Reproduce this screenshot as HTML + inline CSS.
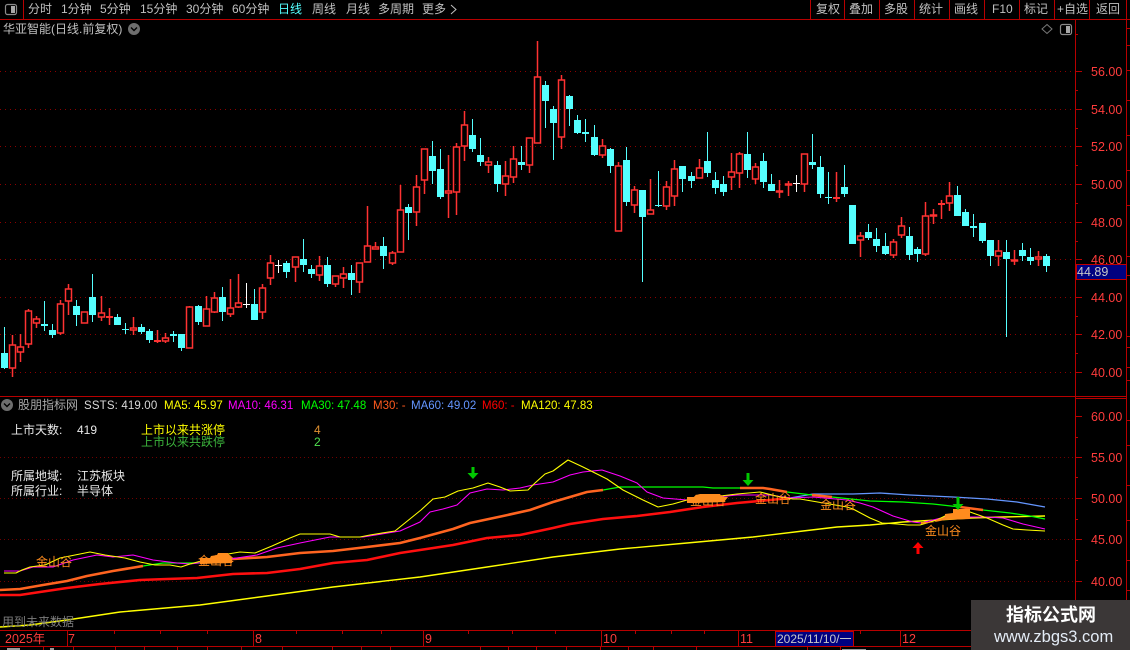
<!DOCTYPE html>
<html lang="zh">
<head>
<meta charset="utf-8">
<title>华亚智能</title>
<style>
html,body{margin:0;padding:0;background:#000;width:1130px;height:650px;overflow:hidden}
svg{display:block}
text{font-family:"Liberation Sans","WenQuanYi Zen Hei","Noto Sans CJK SC",sans-serif;font-size:12px}
.g{fill:#c0c0c0}
.ax{fill:#ff3c3c;font-size:12.5px}
.j{fill:#ff8c1e;font-size:12px}
</style>
</head>
<body>
<svg xmlns="http://www.w3.org/2000/svg" width="1130" height="650" viewBox="0 0 1130 650">
<rect width="1130" height="650" fill="#000"/>

<!-- toolbar -->
<g shape-rendering="crispEdges" stroke="#b80000" fill="none">
<path d="M0 19.5H1130M23.5 0V19M810.5 0V19M844.5 0V19M879.5 0V19M914.5 0V19M949.5 0V19M984.5 0V19M1019.5 0V19M1054.5 0V19M1089.5 0V19M1126.5 0V19"/>
</g>
<rect x="5.5" y="4.5" width="11" height="10" rx="2" fill="#000" stroke="#8a8a8a" stroke-width="1.2"/>
<rect x="11" y="6" width="4" height="7" fill="#a8a8a8"/>
<g class="g">
<text x="28" y="13" class="g">分时</text>
<text x="61" y="13" class="g">1分钟</text>
<text x="100" y="13" class="g">5分钟</text>
<text x="140" y="13" class="g">15分钟</text>
<text x="186" y="13" class="g">30分钟</text>
<text x="232" y="13" class="g">60分钟</text>
<text x="278" y="13" fill="#55ffff">日线</text>
<text x="312" y="13" class="g">周线</text>
<text x="346" y="13" class="g">月线</text>
<text x="378" y="13" class="g">多周期</text>
<text x="422" y="13" class="g">更多</text>
</g>
<path d="M451 5l5 4.5-5 4.5" fill="none" stroke="#c0c0c0"/>
<text x="816" y="13" class="g">复权</text>
<text x="849" y="13" class="g">叠加</text>
<text x="884" y="13" class="g">多股</text>
<text x="919" y="13" class="g">统计</text>
<text x="954" y="13" class="g">画线</text>
<text x="992" y="13" class="g">F10</text>
<text x="1024" y="13" class="g">标记</text>
<text x="1057" y="13" class="g">+自选</text>
<text x="1096" y="13" class="g">返回</text>

<!-- title -->
<text x="3" y="33" class="g">华亚智能(日线.前复权)</text>
<circle cx="134" cy="29" r="6" fill="#6e6e6e"/>
<path d="M131 27.5l3 3 3-3" fill="none" stroke="#000" stroke-width="1.4"/>
<path d="M1047 24.5l5 4.5-5 4.5-5-4.5z" fill="none" stroke="#7a7a7a"/>
<rect x="1060.5" y="24.5" width="11" height="10" rx="2" fill="#000" stroke="#8a8a8a" stroke-width="1.2"/>
<rect x="1066" y="26" width="4" height="7" fill="#a8a8a8"/>

<!-- grids -->
<g shape-rendering="crispEdges" stroke="#8c0000" stroke-dasharray="1 4">
<path d="M0 71.5H1075M0 109.5H1075M0 146.5H1075M0 184.5H1075M0 222.5H1075M0 259.5H1075M0 297.5H1075M0 334.5H1075M0 372.5H1075"/>
</g>
<g shape-rendering="crispEdges" stroke="#700000" stroke-dasharray="1 3">
<path d="M0 457.5H1075M0 498.5H1075M0 539.5H1075M0 581.5H1075"/>
</g>

<!-- cyan candles: wicks -->
<path shape-rendering="crispEdges" fill="none" stroke="#55ffff" d="M4.5 327V369M44.5 301V331M52.5 324V338M76.5 300V326M92.5 274V322M117.5 314V325M125.5 323V334M141.5 324V334M149.5 329V343M173.5 331V342M181.5 334V351M198.5 305V325M222.5 287V321M254.5 289V320M286.5 261V278M303.5 239V272M311.5 265V278M327.5 257V287M351.5 265V295M383.5 237V269M408.5 204V240M432.5 141V184M440.5 149V199M472.5 119V152M480.5 138V166M497.5 161V192M521.5 146V170M545.5 81V128M553.5 106V160M569.5 95V126M577.5 115V134M585.5 119V142M594.5 125V156M610.5 148V173M626.5 147V206M642.5 190V282M658.5 171V207M682.5 166V192M691.5 172V188M707.5 132V177M715.5 172V194M723.5 176V196M747.5 132V178M763.5 153V188M771.5 174V191M812.5 134V169M820.5 156V198M828.5 172V204M844.5 165V197M852.5 205V244M868.5 224V240M876.5 228V252M885.5 233V255M909.5 227V260M917.5 247V262M957.5 186V216M965.5 209V226M973.5 214V237M982.5 223V243M990.5 240V266M1006.5 240V337M1022.5 243V261M1030.5 248V265M1046.5 254V272"/>
<!-- cyan candles: bodies -->
<path shape-rendering="crispEdges" fill="#55ffff" d="M1 353h7v15h-7zM41 324h7v2h-7zM49 330h7v5h-7zM73 306h7v9h-7zM89 297h7v18h-7zM114 317h7v8h-7zM122 329h7v1h-7zM138 327h7v5h-7zM146 331h7v9h-7zM170 334h7v2h-7zM178 334h7v14h-7zM195 306h7v16h-7zM219 297h7v15h-7zM251 304h7v16h-7zM283 263h7v9h-7zM300 259h7v6h-7zM308 269h7v5h-7zM324 265h7v19h-7zM348 273h7v7h-7zM380 246h7v10h-7zM405 207h7v6h-7zM429 156h7v15h-7zM437 169h7v28h-7zM469 135h7v14h-7zM477 155h7v7h-7zM494 165h7v19h-7zM518 162h7v3h-7zM542 85h7v16h-7zM550 109h7v14h-7zM566 96h7v13h-7zM574 120h7v13h-7zM582 132h7v2h-7zM591 137h7v18h-7zM607 149h7v17h-7zM623 160h7v42h-7zM639 190h7v27h-7zM655 205h7v1h-7zM679 166h7v13h-7zM688 176h7v5h-7zM704 161h7v12h-7zM712 180h7v8h-7zM720 184h7v8h-7zM744 154h7v16h-7zM760 161h7v21h-7zM768 184h7v7h-7zM809 162h7v3h-7zM817 167h7v27h-7zM825 197h7v1h-7zM841 187h7v7h-7zM849 205h7v39h-7zM865 232h7v6h-7zM873 239h7v7h-7zM882 246h7v8h-7zM906 236h7v19h-7zM914 249h7v5h-7zM954 195h7v21h-7zM962 212h7v14h-7zM970 226h7v2h-7zM979 223h7v18h-7zM987 240h7v16h-7zM1003 252h7v7h-7zM1019 250h7v6h-7zM1027 257h7v4h-7zM1043 256h7v10h-7z"/>

<!-- red candles -->
<path fill="none" stroke="#ff3232" stroke-width="1.5" d="M9.5 345h6v23h-6zM12.5 335V345M12.5 368V377M17.5 347h6v5h-6zM20.5 334V347M20.5 352V362M25.5 311h6v33h-6zM28.5 309V311M28.5 344V348M33.5 319h6v4h-6zM36.5 316V319M36.5 323V328M57.5 304h6v29h-6zM60.5 300V304M60.5 333V335M65.5 289h6v12h-6zM68.5 284V289M68.5 301V315M81.5 312h6v11h-6zM98.5 313h6v4h-6zM101.5 296V313M101.5 317V321M109.5 308V325M130.5 328h6v2h-6zM133.5 317V328M133.5 330V335M157.5 330V343M162.5 338h6v3h-6zM165.5 333V338M165.5 341V343M186.5 307h6v41h-6zM189.5 306V307M203.5 309h6v17h-6zM206.5 296V309M211.5 298h6v14h-6zM214.5 292V298M214.5 312V313M227.5 308h6v6h-6zM230.5 279V308M230.5 314V317M235.5 303h6v4h-6zM238.5 274V303M238.5 307V308M259.5 288h6v24h-6zM262.5 284V288M262.5 312V319M267.5 263h6v15h-6zM270.5 255V263M270.5 278V285M292.5 257h6v10h-6zM295.5 267V282M316.5 266h6v9h-6zM319.5 256V266M319.5 275V281M332.5 276h6v8h-6zM335.5 284V287M340.5 274h6v4h-6zM343.5 267V274M343.5 278V288M356.5 263h6v19h-6zM359.5 282V293M364.5 246h6v16h-6zM367.5 206V246M372.5 247h6v2h-6zM375.5 242V247M389.5 253h6v10h-6zM392.5 251V253M392.5 263V265M397.5 210h6v42h-6zM400.5 185V210M413.5 187h6v25h-6zM416.5 175V187M416.5 212V226M421.5 149h6v31h-6zM424.5 180V194M445.5 191h6v2h-6zM448.5 155V191M448.5 193V218M453.5 147h6v45h-6zM456.5 143V147M456.5 192V215M461.5 125h6v21h-6zM464.5 111V125M464.5 146V161M485.5 162h6v3h-6zM488.5 157V162M488.5 165V173M502.5 176h6v8h-6zM505.5 161V176M505.5 184V196M510.5 159h6v18h-6zM513.5 146V159M513.5 177V183M526.5 138h6v27h-6zM529.5 165V173M534.5 77h6v66h-6zM537.5 41V77M558.5 80h6v57h-6zM561.5 75V80M561.5 137V149M599.5 146h6v9h-6zM602.5 139V146M602.5 155V158M615.5 166h6v65h-6zM618.5 162V166M631.5 190h6v15h-6zM634.5 186V190M634.5 205V213M647.5 210h6v4h-6zM650.5 179V210M663.5 187h6v19h-6zM666.5 181V187M666.5 206V210M671.5 169h6v27h-6zM674.5 160V169M674.5 196V206M696.5 168h6v10h-6zM699.5 159V168M728.5 172h6v5h-6zM731.5 153V172M731.5 177V190M736.5 154h6v19h-6zM739.5 152V154M739.5 173V188M752.5 167h6v12h-6zM755.5 163V167M755.5 179V184M776.5 191h6v1h-6zM779.5 180V191M779.5 192V198M785.5 184h6v1h-6zM788.5 181V184M788.5 185V196M801.5 154h6v30h-6zM804.5 184V192M836.5 172V202M857.5 236h6v4h-6zM860.5 232V236M860.5 240V257M890.5 242h6v13h-6zM893.5 239V242M893.5 255V258M898.5 226h6v9h-6zM901.5 217V226M901.5 235V238M922.5 216h6v38h-6zM925.5 202V216M925.5 254V256M930.5 215h6v1h-6zM933.5 209V215M933.5 216V224M941.5 200V219M946.5 196h6v7h-6zM949.5 182V196M949.5 203V211M995.5 251h6v5h-6zM998.5 240V251M998.5 256V266M1011.5 260h6v1h-6zM1014.5 250V260M1014.5 261V265M1035.5 257h6v2h-6zM1038.5 251V257M1038.5 259V266"/>
<path shape-rendering="crispEdges" fill="#ff3232" d="M106 316h7v2h-7zM154 340h7v2h-7zM833 197h7v2h-7zM938 203h7v2h-7z"/>
<!-- white crosses -->
<path shape-rendering="crispEdges" fill="none" stroke="#fff" d="M246.5 283V308M243 304.5H250M278.5 260V273M275 265.5H282M796.5 175V192M793 183.5H800"/>

<!-- frames and axes -->
<g shape-rendering="crispEdges" stroke="#b80000" fill="none">
<path d="M0 396.5H1126M0 630.5H1130M0 646.5H1130M1075.5 20V630M1126.5 20V630M1076 398.5H1126"/>
<path d="M1075 71.5h7M1075 109.5h7M1075 146.5h7M1075 184.5h7M1075 222.5h7M1075 259.5h7M1075 297.5h7M1075 334.5h7M1075 372.5h7M1075 416.5h7M1075 457.5h7M1075 498.5h7M1075 539.5h7M1075 581.5h7"/>
<path d="M1075 34.5h3M1075 90.5h3M1075 128.5h3M1075 165.5h3M1075 203.5h3M1075 241.5h3M1075 316.5h3M1075 353.5h3M1075 437.5h3M1075 477.5h3M1075 519.5h3M1075 560.5h3M1075 602.5h3"/>
<path d="M1127 28.5h3M1127 45.5h3M1127 70.5h3M1127 100.5h3M1127 135.5h3M1127 170.5h3M1127 205.5h3M1127 256.5h3M1127 275.5h3M1127 336.5h3M1127 347.5h3M1127 367.5h3M1127 380.5h3M1127 420.5h3M1127 445.5h3M1127 485.5h3M1127 520.5h3M1127 560.5h3M1127 590.5h3"/>
<path d="M67.5 631V646M253.5 631V646M423.5 631V646M601.5 631V646M738.5 631V646M900.5 631V646"/>
<path d="M114.5 631v3M160.5 631v3M207.5 631v3M296.5 631v3M342.5 631v3M381.5 631v3M468.5 631v3M512.5 631v3M555.5 631v3M635.5 631v3M671.5 631v3M704.5 631v3M860.5 631v3"/>
<path d="M43.5 647v3M73.5 647v3M115.5 647v3M144.5 647v3M177.5 647v3M207.5 647v3M241.5 647v3M282.5 647v3M332.5 647v3M361.5 647v3M390.5 647v3M480.5 647v3M508.5 647v3M536.5 647v3M566.5 647v3M600.5 647v3M628.5 647v3M653.5 647v3M696.5 647v3M807.5 647v3M840.5 647v3"/>
</g>
<text x="1091" y="76" class="ax">56.00</text>
<text x="1091" y="114" class="ax">54.00</text>
<text x="1091" y="151" class="ax">52.00</text>
<text x="1091" y="189" class="ax">50.00</text>
<text x="1091" y="227" class="ax">48.00</text>
<text x="1091" y="264" class="ax">46.00</text>
<text x="1091" y="302" class="ax">44.00</text>
<text x="1091" y="339" class="ax">42.00</text>
<text x="1091" y="377" class="ax">40.00</text>
<text x="1091" y="421" class="ax">60.00</text>
<text x="1091" y="462" class="ax">55.00</text>
<text x="1091" y="503" class="ax">50.00</text>
<text x="1091" y="544" class="ax">45.00</text>
<text x="1091" y="586" class="ax">40.00</text>
<rect x="1076.5" y="264.5" width="50" height="15" fill="#000080" stroke="#c00000"/>
<text x="1077" y="276" fill="#c8c8c8" style="font-size:12.5px">44.89</text>

<!-- indicator header -->
<circle cx="7" cy="405" r="6" fill="#6e6e6e"/>
<path d="M4 403.5l3 3 3-3" fill="none" stroke="#000" stroke-width="1.4"/>
<text x="18" y="409" fill="#a8a8a8">股朋指标网</text>
<text x="84" y="409" fill="#d8d8d8" style="font-size:11.5px;letter-spacing:.15px">SSTS: 419.00</text>
<text x="164" y="409" fill="#ffff00" style="font-size:11.5px">MA5: 45.97</text>
<text x="228" y="409" fill="#ff00ff" style="font-size:11.5px">MA10: 46.31</text>
<text x="301" y="409" fill="#00ff00" style="font-size:11.5px">MA30: 47.48</text>
<text x="373" y="409" fill="#ff5a1e" style="font-size:11.5px">M30: -</text>
<text x="411" y="409" fill="#6496ff" style="font-size:11.5px">MA60: 49.02</text>
<text x="482" y="409" fill="#ff0000" style="font-size:11.5px">M60: -</text>
<text x="521" y="409" fill="#ffff00" style="font-size:11.5px">MA120: 47.83</text>

<text x="11" y="434" fill="#e8e8e8">上市天数:</text>
<text x="77" y="434" fill="#e8e8e8">419</text>
<text x="141" y="434" fill="#ffff00">上市以来共涨停</text>
<text x="141" y="446" fill="#3cb43c">上市以来共跌停</text>
<text x="314" y="434" fill="#e09030">4</text>
<text x="314" y="446" fill="#50e050">2</text>
<text x="11" y="480" fill="#e8e8e8">所属地域:</text>
<text x="77" y="480" fill="#e8e8e8">江苏板块</text>
<text x="11" y="495" fill="#e8e8e8">所属行业:</text>
<text x="77" y="495" fill="#e8e8e8">半导体</text>

<!-- indicator lines -->
<g fill="none" stroke-linejoin="round">
<polyline stroke="#ffff00" stroke-width="1.4" points="0,627 30,625 67,620 120,612 200,605 267,596 333,587 420,577 487,567 553,557 620,549 687,543 753,537 803,531 837,527 870,525 903,522 937,520 970,518 1003,517 1045,516"/>
<polyline stroke="#ff0f0f" stroke-width="2.6" points="0,595 20,595 40,592 67,588 100,584 140,580 167,579 197,578 233,574 267,573 300,569 333,563 367,560 400,553 420,550 453,545 487,538 520,535 553,528 570,524 603,519 637,516 670,512 703,507 737,503 770,500 790,498"/>
<polyline stroke="#6496ff" stroke-width="1.3" points="790,498 813,494 853,494 880,493 910,495 953,497 987,499 1017,502 1045,507"/>
<polyline stroke="#00ff00" stroke-width="1.3" points="143,566 163,563 193,563 200,563"/>
<polyline stroke="#00ff00" stroke-width="1.3" points="603,490 620,487 703,487 713,488 740,488"/>
<polyline stroke="#00ff00" stroke-width="1.3" points="787,492 812,495 832,497 870,501 903,502 933,504 960,507"/>
<polyline stroke="#00ff00" stroke-width="1.3" points="983,510 1010,513 1030,516 1045,519"/>
<polyline stroke="#ff6420" stroke-width="2.6" points="0,590 20,589 43,585 67,581 87,576 113,571 143,566"/>
<polyline stroke="#ff6420" stroke-width="2.6" points="200,563 233,559 267,557 300,553 333,551 367,547 400,543 420,538 453,529 470,523 503,516 530,510 553,502 587,492 603,490"/>
<polyline stroke="#ff6420" stroke-width="2.6" points="740,488 763,488 770,489 787,492"/>
<polyline stroke="#ff6420" stroke-width="2.6" points="812,495 832,497"/>
<polyline stroke="#ff6420" stroke-width="2.6" points="960,507 983,510"/>
<polyline stroke="#ff00ff" stroke-width="1.1" points="4,571 20,571 33,567 53,567 73,560 97,555 113,557 133,555 153,560 177,563 190,564 230,559 257,555 277,548 300,543 330,537 363,537 400,531 420,522 430,512 443,509 457,505 470,493 487,489 503,490 520,488 533,485 553,482 570,475 583,472 602,470 620,476 637,483 647,492 663,498 687,500 737,495 770,495 790,498 813,497 847,500 860,503 873,507 893,516 913,522 921,523 945,517 987,517 1003,518 1023,524 1045,529"/>
<polyline stroke="#ffff00" stroke-width="1.1" points="4,573 16,573 22,570 30,567 45,565 60,558 75,555 90,552 105,555 125,558 140,562 155,565 170,565 181,567 190,564 205,560 222,555 240,552 255,553 272,546 290,538 300,534 330,534 340,537 360,537 370,535 395,531 421,510 433,499 445,497 458,491 473,488 488,483 500,487 510,491 528,490 535,483 545,474 553,471 568,460 583,467 607,479 623,490 633,495 643,500 658,507 673,504 687,500 737,494 760,492 780,497 793,499 800,499 847,507 853,509 870,518 882,523 897,524 908,525 920,525 937,520 947,515 970,512 987,518 1003,525 1013,529 1027,530 1045,531"/>
</g>
<!-- clouds -->
<g fill="#ff8c1e">
<path d="M200 558h10l1-2 6-1 1-2h10l2 3 2 2v5l-32 1z"/>
<path d="M687 497h7l2-2 4-1h20l2 3h6l-4 5-28 1h-9z"/>
<path d="M921 522h14l1-2 9-3v-3l8-1v-4h17v10l-25 1-10 2-14 2z"/>
</g>
<text x="36" y="566" class="j">金山谷</text>
<text x="198" y="565" class="j">金山谷</text>
<text x="690" y="505" class="j">金山谷</text>
<text x="755" y="503" class="j">金山谷</text>
<text x="820" y="509" class="j">金山谷</text>
<text x="925" y="535" class="j">金山谷</text>
<!-- arrows -->
<g fill="#00c800">
<path d="M471.500 467h3v6h4l-5.500 6-5.500-6h4z"/>
<path d="M746.500 473h3v7h4l-5.500 6-5.500-6h4z"/>
<path d="M956.500 497h3v7h4l-5.500 6-5.500-6h4z"/>
</g>
<path d="M916.500 554h3v-6h4l-5.500-6-5.500 6h4z" fill="#ff0000"/>

<text x="2" y="626" fill="#7c7c7c">用到未来数据</text>

<!-- time axis -->
<text x="5" y="643" class="ax">2025年</text>
<text x="68" y="643" class="ax">7</text>
<text x="255" y="643" class="ax">8</text>
<text x="425" y="643" class="ax">9</text>
<text x="603" y="643" class="ax">10</text>
<text x="740" y="643" class="ax">11</text>
<text x="902" y="643" class="ax">12</text>
<rect x="775.500" y="631.500" width="78" height="15" fill="#000080" stroke="#c00000"/>
<text x="777" y="643" fill="#c8c8c8" style="font-size:12px">2025/11/10/一</text>
<path d="M7 648h13v2H7zM50 648h4v2h-4zM842 649h24v1h-24z" fill="#9a9a9a"/>

<!-- watermark -->
<rect x="971" y="600" width="159" height="50" fill="#3b3737"/>
<text x="1006" y="621" fill="#fff" style="font-size:18px;font-weight:bold;font-family:'Liberation Sans','Noto Sans CJK SC',sans-serif">指标公式网</text>
<text x="994" y="642" fill="#e4ecf6" style="font-size:16.500px">www.zbgs3.com</text>
</svg>
</body>
</html>
